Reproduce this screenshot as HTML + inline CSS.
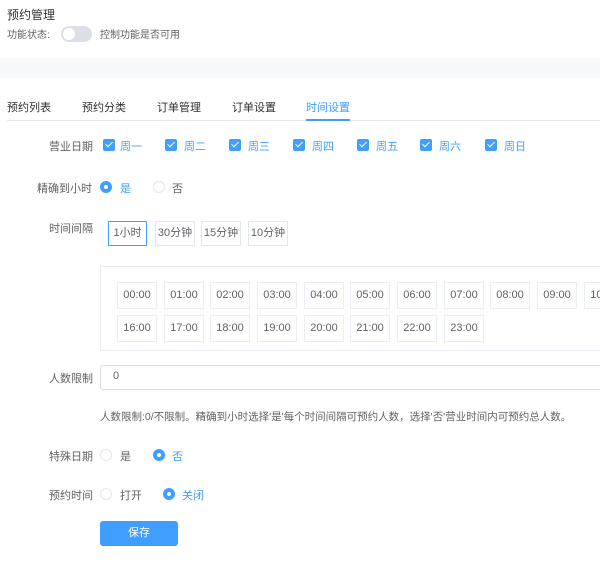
<!DOCTYPE html>
<html><head><meta charset="utf-8"><style>
*{box-sizing:border-box;margin:0;padding:0}
body{width:600px;height:569px;overflow:hidden;background:#fff;font-family:"Liberation Sans","Noto Sans CJK SC",sans-serif;font-size:11px;color:#606266;position:relative}
.a{position:absolute;white-space:nowrap}
.cb{position:absolute;width:12px;height:12px;background:#409eff;border-radius:2px}
.cb:after{content:"";position:absolute;left:4px;top:1px;width:3px;height:6px;border:solid #fff;border-width:0 1.5px 1.5px 0;transform:rotate(45deg)}
.ra{position:absolute;width:12px;height:12px;border-radius:50%;border:1px solid #e4e7ed;background:#fff}
.ra.on{background:#409eff;border-color:#409eff}
.ra.on:after{content:"";position:absolute;left:3px;top:3px;width:4px;height:4px;border-radius:50%;background:#fff}
.blue{color:#409eff}
.bx{position:absolute;border:1px solid #e4e7ed;text-align:center;color:#606266}
.t{position:absolute;width:40px;height:27px;line-height:25px;border:1px solid #ebeef5;text-align:center;font-size:11px;color:#606266}
</style></head><body>
<div class="a" style="left:7px;top:6px;font-size:12px;color:#303133">预约管理</div>
<div class="a" style="left:7px;top:26px;font-size:10px;color:#606266">功能状态:</div>
<div class="a" style="left:61px;top:26px;width:31px;height:16px;border-radius:8px;background:#dcdfe6"></div>
<div class="a" style="left:63px;top:28px;width:12px;height:12px;border-radius:50%;background:#fff"></div>
<div class="a" style="left:100px;top:26px;font-size:10px">控制功能是否可用</div>
<div class="a" style="left:0;top:58px;width:600px;height:20px;background:#f7f8fa"></div>
<div class="a" style="left:7px;top:99px;color:#303133">预约列表</div>
<div class="a" style="left:82px;top:99px;color:#303133">预约分类</div>
<div class="a" style="left:157px;top:99px;color:#303133">订单管理</div>
<div class="a" style="left:232px;top:99px;color:#303133">订单设置</div>
<div class="a blue" style="left:306px;top:99px">时间设置</div>
<div class="a" style="left:7px;top:120px;width:593px;height:1px;background:#e4e7ed"></div>
<div class="a" style="left:306px;top:119px;width:44px;height:2px;background:#409eff"></div>

<div class="a" style="left:49px;top:138px">营业日期</div>
<div class="cb" style="left:103px;top:139px"></div><div class="a blue" style="left:120px;top:138px">周一</div>
<div class="cb" style="left:165px;top:139px"></div><div class="a blue" style="left:184px;top:138px">周二</div>
<div class="cb" style="left:229px;top:139px"></div><div class="a blue" style="left:248px;top:138px">周三</div>
<div class="cb" style="left:293px;top:139px"></div><div class="a blue" style="left:312px;top:138px">周四</div>
<div class="cb" style="left:357px;top:139px"></div><div class="a blue" style="left:376px;top:138px">周五</div>
<div class="cb" style="left:420px;top:139px"></div><div class="a blue" style="left:439px;top:138px">周六</div>
<div class="cb" style="left:485px;top:139px"></div><div class="a blue" style="left:504px;top:138px">周日</div>

<div class="a" style="left:37px;top:180px">精确到小时</div>
<div class="ra on" style="left:100px;top:181px"></div><div class="a blue" style="left:120px;top:180px">是</div>
<div class="ra" style="left:153px;top:181px"></div><div class="a" style="left:172px;top:180px">否</div>

<div class="a" style="left:49px;top:220px">时间间隔</div>
<div class="bx" style="left:108px;top:221px;width:39px;height:25px;line-height:23px;border-color:#409eff">1小时</div>
<div class="bx" style="left:155px;top:221px;width:40px;height:25px;line-height:23px">30分钟</div>
<div class="bx" style="left:201px;top:221px;width:40px;height:25px;line-height:23px">15分钟</div>
<div class="bx" style="left:248px;top:221px;width:40px;height:25px;line-height:23px">10分钟</div>

<div class="a" style="left:100px;top:266px;width:520px;height:85px;border:1px solid #ebeef5"></div>
<div class="t" style="left:117px;top:282px">00:00</div>
<div class="t" style="left:164px;top:282px">01:00</div>
<div class="t" style="left:210px;top:282px">02:00</div>
<div class="t" style="left:257px;top:282px">03:00</div>
<div class="t" style="left:304px;top:282px">04:00</div>
<div class="t" style="left:350px;top:282px">05:00</div>
<div class="t" style="left:397px;top:282px">06:00</div>
<div class="t" style="left:444px;top:282px">07:00</div>
<div class="t" style="left:490px;top:282px">08:00</div>
<div class="t" style="left:537px;top:282px">09:00</div>
<div class="t" style="left:584px;top:282px">10:00</div>
<div class="t" style="left:117px;top:315px">16:00</div>
<div class="t" style="left:164px;top:315px">17:00</div>
<div class="t" style="left:210px;top:315px">18:00</div>
<div class="t" style="left:257px;top:315px">19:00</div>
<div class="t" style="left:304px;top:315px">20:00</div>
<div class="t" style="left:350px;top:315px">21:00</div>
<div class="t" style="left:397px;top:315px">22:00</div>
<div class="t" style="left:444px;top:315px">23:00</div>

<div class="a" style="left:49px;top:370px">人数限制</div>
<div class="a" style="left:100px;top:365px;width:520px;height:25px;border:1px solid #dcdfe6;border-radius:3px"></div>
<div class="a" style="left:113px;top:370px;font-size:11px">0</div>
<div class="a" style="left:100px;top:409px;font-size:10.5px">人数限制:0/不限制。精确到小时选择'是'每个时间间隔可预约人数，选择'否'营业时间内可预约总人数。</div>

<div class="a" style="left:49px;top:448px">特殊日期</div>
<div class="ra" style="left:100px;top:449px"></div><div class="a" style="left:120px;top:448px">是</div>
<div class="ra on" style="left:153px;top:449px"></div><div class="a blue" style="left:172px;top:448px">否</div>

<div class="a" style="left:49px;top:487px">预约时间</div>
<div class="ra" style="left:100px;top:488px"></div><div class="a" style="left:120px;top:487px">打开</div>
<div class="ra on" style="left:163px;top:488px"></div><div class="a blue" style="left:182px;top:487px">关闭</div>

<div class="a" style="left:100px;top:521px;width:78px;height:25px;background:#409eff;border-radius:3px;color:#fff;text-align:center;line-height:25px;font-size:11px">保存</div>
</body></html>
